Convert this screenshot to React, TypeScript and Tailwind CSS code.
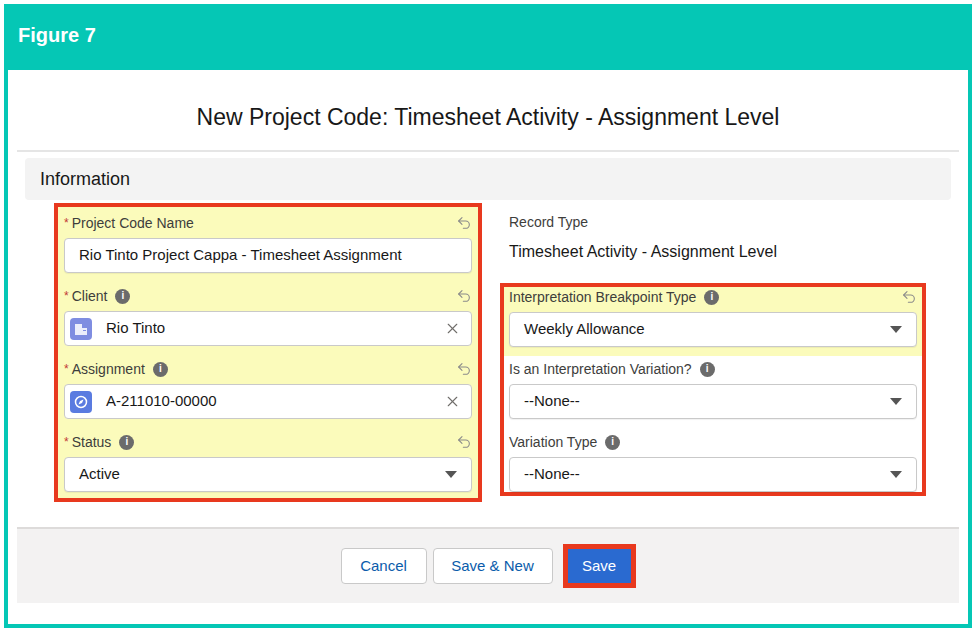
import { Undo2, X } from 'lucide-react';

const F = { fontFamily: '"Liberation Sans", Arial, sans-serif' };

const Info = () => (
  <span className="inline-flex items-center justify-center w-[15px] h-[15px] rounded-full bg-[#6b6b6b] text-white text-[10px] font-bold ml-2 leading-none">i</span>
);

const Caret = () => (
  <svg width="12" height="8" viewBox="0 0 12 8"><path d="M0 0h12L6 7z" fill="#555" /></svg>
);

const Label = ({ text, req, info, undo }: { text: string; req?: boolean; info?: boolean; undo?: boolean }) => (
  <div className="flex items-center h-[20px] text-[14px] text-[#3e3e3c]">
    {req && <span className="text-[#c23934] mr-[3px] text-[12px]">*</span>}
    <span>{text}</span>
    {info && <Info />}
    <div className="flex-1" />
    {undo && <Undo2 size={16} className="text-[#8a8a8a]" strokeWidth={1.6} />}
  </div>
);

const Box = ({ children }: { children: React.ReactNode }) => (
  <div className="mt-[5px] h-[35px] flex items-center bg-white border border-[#c9c9c9] rounded-[4px] px-[14px] text-[15px] text-[#181818] shadow-[0_1px_1px_rgba(0,0,0,0.06)]">{children}</div>
);

const Lookup = ({ color, kind, value }: { color: string; kind: 'acct' | 'nav'; value: string }) => (
  <div className="mt-[5px] h-[35px] flex items-center bg-white border border-[#c9c9c9] rounded-[4px] pl-[5px] pr-[10px] text-[15px] text-[#181818]">
    <span className="w-[22px] h-[22px] rounded-[4px] flex items-center justify-center" style={{ background: color }}>
      {kind === 'acct' ? (
        <svg width="14" height="14" viewBox="0 0 14 14"><rect x="1" y="2" width="7" height="11" fill="#fff" opacity="0.85" /><rect x="8" y="6" width="5" height="7" fill="#fff" opacity="0.85" /><rect x="9" y="8" width="3" height="1" fill={color} /></svg>
      ) : (
        <svg width="14" height="14" viewBox="0 0 14 14"><circle cx="7" cy="7" r="5.5" fill="none" stroke="#fff" strokeWidth="1.5" /><path d="M9.5 4.5 8 8 4.5 9.5 6 6z" fill="#fff" /></svg>
      )}
    </span>
    <span className="ml-[14px] flex-1">{value}</span>
    <X size={17} className="text-[#706e6b]" strokeWidth={1.6} />
  </div>
);

export default function App() {
  return (
    <div className="w-[976px] h-[632px] bg-white p-[4px]" style={F}>
      <div className="h-[624px] flex flex-col bg-[#05c7b5] px-[4px] pb-[4px]">
        <div className="h-[66px] flex items-center px-[10px] text-white text-[20px] font-bold pb-[4px]">Figure 7</div>
        <div className="flex-1 bg-white flex flex-col px-[9px]">
          <div className="h-[80px] flex items-center justify-center text-[23px] text-[#181818] pt-[14px]">New Project Code: Timesheet Activity - Assignment Level</div>
          <div className="h-[2px] bg-[#e5e5e5]" />
          <div className="mx-[8px] mt-[6px] h-[42px] bg-[#f3f3f3] rounded-[4px] flex items-center px-[15px] text-[18px] text-[#181818]">Information</div>
          <div className="flex mt-[3px] h-[299px]">
            <div className="ml-[37px] w-[428px] border-[4px] border-[#e8391e] bg-[#fbfbbb] px-[6px] pt-[6px] flex flex-col gap-[13px]">
              <div><Label text="Project Code Name" req undo /><Box>Rio Tinto Project Cappa - Timesheet Assignment</Box></div>
              <div><Label text="Client" req info undo /><Lookup color="#7f8de1" kind="acct" value="Rio Tinto" /></div>
              <div><Label text="Assignment" req info undo /><Lookup color="#5a7be0" kind="nav" value="A-211010-00000" /></div>
              <div><Label text="Status" req info undo /><Box><span className="flex-1">Active</span><Caret /></Box></div>
            </div>
            <div className="ml-[18px] w-[426px] flex flex-col">
              <div className="pl-[9px] pt-[9px] text-[14px] text-[#3e3e3c]">Record Type</div>
              <div className="pl-[9px] pt-[7px] text-[16px] text-[#181818]">Timesheet Activity - Assignment Level</div>
              <div className="mt-[19px] h-[213px] border-[4px] border-[#e8391e] flex flex-col">
                <div className="bg-[#fbfbbb] px-[5px] pb-[9px]"><Label text="Interpretation Breakpoint Type" info undo /><Box><span className="flex-1">Weekly Allowance</span><Caret /></Box></div>
                <div className="px-[5px] pt-[3px]"><Label text="Is an Interpretation Variation?" info /><Box><span className="flex-1">--None--</span><Caret /></Box></div>
                <div className="px-[5px] pt-[13px]"><Label text="Variation Type" info /><Box><span className="flex-1">--None--</span><Caret /></Box></div>
              </div>
            </div>
          </div>
          <div className="mt-[25px] h-[76px] bg-[#f3f2f2] border-t-2 border-[#dddbda] flex items-center justify-center gap-[6px] text-[15px]">
            <button className="h-[36px] w-[86px] bg-white border border-[#c9c9c9] rounded-[4px] text-[#0b5cab]">Cancel</button>
            <button className="h-[36px] w-[120px] bg-white border border-[#c9c9c9] rounded-[4px] text-[#0b5cab]">Save &amp; New</button>
            <div className="ml-[4px] border-[4px] border-[#e8391e] p-[1px] bg-[#e8391e]">
              <button className="h-[34px] w-[63px] bg-[#2a6ad0] text-white">Save</button>
            </div>
          </div>
          <div className="flex-1" />
        </div>
      </div>
    </div>
  );
}
